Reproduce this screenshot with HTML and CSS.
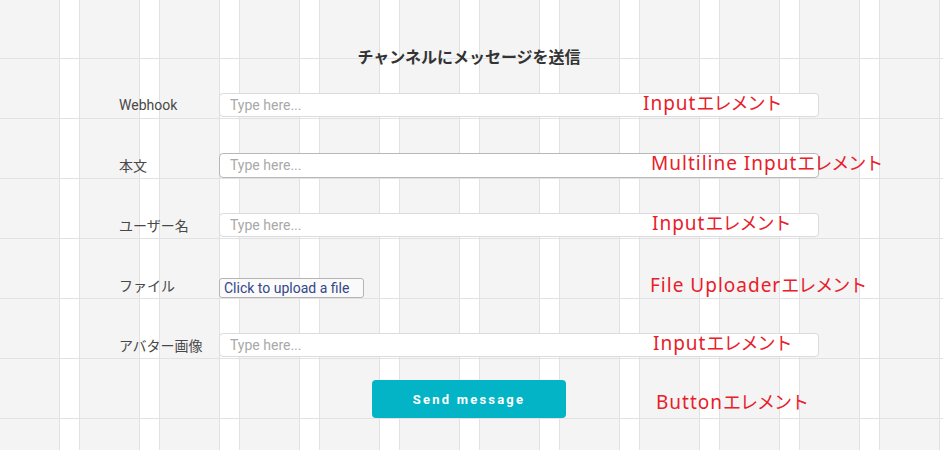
FILE: index.html
```html
<!DOCTYPE html>
<html>
<head>
  <title>チャンネルにメッセージを送信</title>
  <link rel="stylesheet" href="styles.css">
</head>
<body>
  <div class="canvas">
    <div class="container">
      <h1>チャンネルにメッセージを送信</h1>
      <form id="messageForm">
        <div class="form-row">
          <label for="webhook">Webhook</label>
          <input type="text" id="webhook" name="webhook" placeholder="Type here...">
        </div>
        <div class="form-row">
          <label for="body">本文</label>
          <input type="text" id="body" name="body" class="multiline" placeholder="Type here...">
        </div>
        <div class="form-row">
          <label for="username">ユーザー名</label>
          <input type="text" id="username" name="username" placeholder="Type here...">
        </div>
        <div class="form-row">
          <label>ファイル</label>
          <button type="button" class="upload">Click to upload a file</button>
        </div>
        <div class="form-row">
          <label for="avatar">アバター画像</label>
          <input type="text" id="avatar" name="avatar" placeholder="Type here...">
        </div>
        <div class="form-actions">
          <button type="submit" class="send">Send message</button>
        </div>
      </form>
    </div>

    <!-- annotations -->
    <span class="note note-1">Input<span class="jp">エレメント</span></span>
    <span class="note note-2">Multiline Input<span class="jp">エレメント</span></span>
    <span class="note note-3">Input<span class="jp">エレメント</span></span>
    <span class="note note-4">File Uploader<span class="jp">エレメント</span></span>
    <span class="note note-5">Input<span class="jp">エレメント</span></span>
    <span class="note note-6">Button<span class="jp">エレメント</span></span>
  </div>
</body>
</html>
```

FILE: styles.css
```css
body {
  margin: 0;
  font-family: Roboto, "Noto Sans CJK JP", sans-serif;
  color: #444;
}

.canvas {
  position: relative;
  min-height: 450px;
  background-color: #fff;
  background-image:
    linear-gradient(to bottom, transparent 58px, #e2e2e2 58px, #e2e2e2 59px, transparent 59px),
    linear-gradient(to right, #f4f4f4 59px, #e2e2e2 59px, #e2e2e2 60px, #fff 60px, #fff 79px, #e2e2e2 79px);
  background-size: 100% 60px, 80px 100%;
  overflow: hidden;
}

.container {
  width: 700px;
  margin-left: 119px;
  padding-top: 48px;
}

.container h1 {
  margin: 0 0 7px;
  font-size: 16px;
  line-height: 20px;
  font-weight: bold;
  text-align: center;
  color: #333;
}

.form-row {
  display: flex;
  align-items: center;
  height: 60px;
}

.form-row label {
  width: 100px;
  font-size: 14px;
  color: #484848;
}

.form-row input {
  width: 600px;
  height: 24px;
  box-sizing: border-box;
  padding: 0 10px;
  border: 1px solid #dcdcdc;
  border-radius: 4px;
  background: #fff;
  font-family: Roboto, sans-serif;
  font-size: 14px;
}

.form-row input::placeholder {
  color: #a9a9a9;
}

.form-row input.multiline {
  height: 25px;
  border-color: #b8b8b8;
}

.upload {
  width: 145px;
  height: 20px;
  margin-top: 5px;
  padding: 0 4px;
  text-align: left;
  border: 1px solid #b4b4b4;
  border-radius: 3px;
  background: #fafafa;
  color: #34468a;
  font-family: Roboto, sans-serif;
  font-size: 14px;
  line-height: 18px;
  cursor: pointer;
}

.form-actions {
  display: flex;
  justify-content: center;
  padding-top: 5px;
}

.send {
  width: 194px;
  height: 38px;
  border: none;
  border-radius: 4px;
  background-color: #02b4c6;
  color: #fff;
  font-family: Roboto, sans-serif;
  font-size: 13px;
  font-weight: bold;
  letter-spacing: 2.2px;
  cursor: pointer;
}

.note {
  position: absolute;
  font-family: "Noto Sans", "Noto Sans CJK JP", sans-serif;
  font-size: 19px;
  line-height: 24px;
  letter-spacing: 1px;
  color: #e8202a;
  white-space: nowrap;
}

.note .jp {
  font-size: 18px;
  letter-spacing: -1px;
}

.note-1 { left: 643px; top: 91px; }
.note-2 { left: 651px; top: 151px; }
.note-3 { left: 652px; top: 211px; }
.note-4 { left: 650px; top: 273px; }
.note-5 { left: 653px; top: 331px; }
.note-6 { left: 656px; top: 390px; }
```
